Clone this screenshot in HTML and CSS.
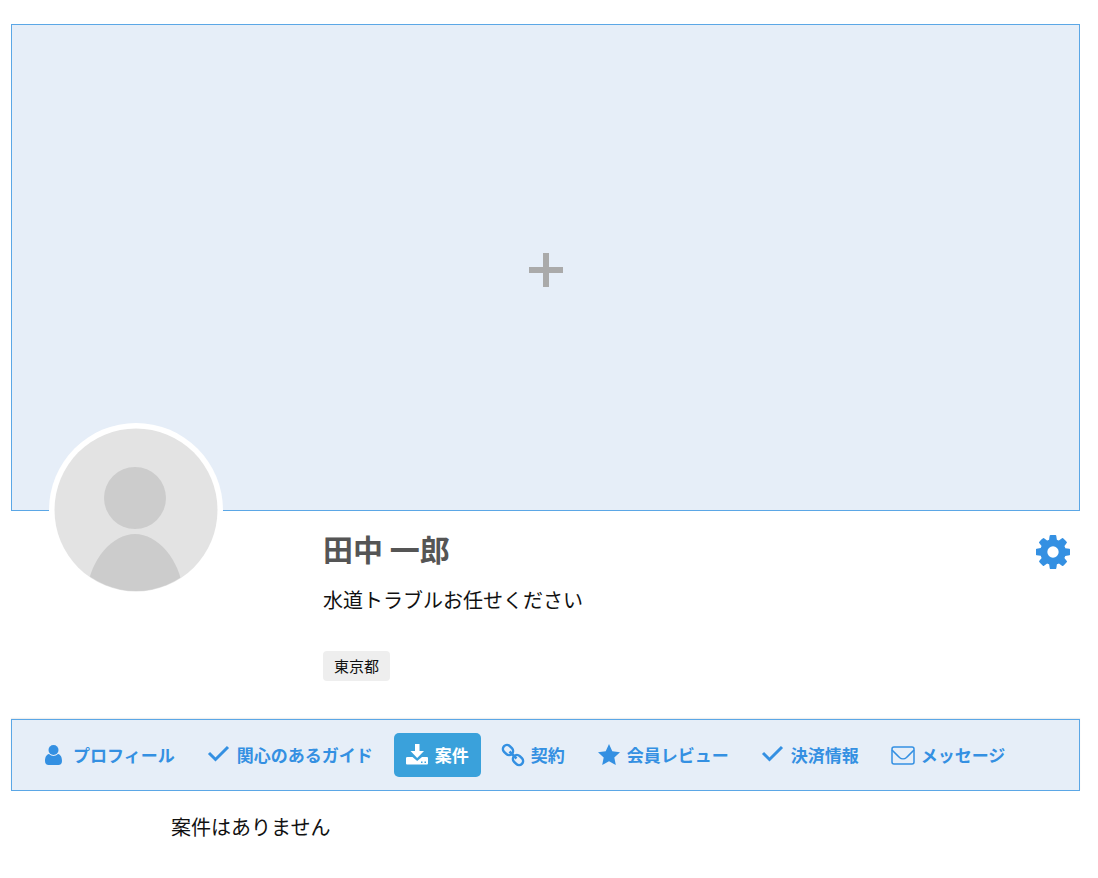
FILE: index.html
```
<!DOCTYPE html>
<html lang="ja">
<head>
  <meta charset="UTF-8" />
  <meta name="viewport" content="width=device-width, initial-scale=1" />
  <title>田中 一郎</title>
  <link rel="stylesheet" href="styles.css">
</head>
<body>

<main class="page">
  <button type="button" class="cover" aria-label="カバー写真を追加">
    <svg class="plus" viewBox="0 0 36 36"><path d="M15 1h6v14h14v6H21v14h-6V21H1v-6h14z"/></svg>
  </button>

  <section class="profile">
    <svg class="avatar" viewBox="0 0 174 174">
      <defs>
        <clipPath id="face"><circle cx="87" cy="87" r="81"/></clipPath>
      </defs>
      <circle cx="87" cy="87" r="87" fill="#fff"/>
      <circle cx="87" cy="87" r="81.5" fill="#e3e3e3"/>
      <g clip-path="url(#face)" fill="#ccc">
        <circle cx="86" cy="75" r="31"/>
        <path d="M38 174C38 140 62 111 86 111S134 140 134 174z"/>
      </g>
    </svg>
    <div class="info">
      <h1>田中 一郎</h1>
      <p class="intro">水道トラブルお任せください</p>
      <span class="tag">東京都</span>
    </div>
    <button type="button" class="settings" aria-label="設定">
      <svg viewBox="0 0 1536 1536"><path d="M1024 768q0-106-75-181t-181-75-181 75-75 181 75 181 181 75 181-75 75-181zm512-109v222q0 12-8 23t-20 13l-185 28q-19 54-39 91 35 50 107 138 10 12 10 25t-9 23q-27 37-99 108t-94 71q-12 0-26-9l-138-108q-44 23-91 38-16 136-29 186-7 28-36 28H657q-14 0-24.500-8.500T621 1506l-28-184q-49-16-90-37l-141 107q-10 9-25 9-14 0-25-11-126-114-165-168-7-10-7-23 0-12 8-23 15-21 51-66.500t54-70.500q-27-50-41-99L29 913q-13-2-21-12.500T0 877V655q0-12 8-23t19-13l186-28q14-46 39-92-40-57-107-138-10-12-10-24 0-10 9-23 26-36 98.500-107.500T337 135q13 0 26 10l138 107q44-23 91-38 16-136 29-186 7-28 36-28h222q14 0 24.500 8.500T915 30l28 184q49 16 90 37l142-107q9-9 24-9 13 0 25 10 129 119 165 170 7 8 7 22 0 12-8 23-15 21-51 66.500t-54 70.500q26 50 41 98l183 28q13 2 21 12.500t8 23.500z"/></svg>
    </button>
  </section>

  <nav class="tabs">
    <a href="#profile">
      <svg viewBox="0 0 22 22"><circle cx="9.500" cy="6" r="5"/><path d="M5 10c2.800 2.600 6.200 2.600 9 0 3 .6 4 3.800 4 7 0 2.600-1.400 4-3.500 4h-10C2.400 21 1 19.600 1 17c0-3.200 1-6.400 4-7z"/></svg>
      プロフィール
    </a>
    <a href="#guide">
      <svg viewBox="0 0 22 22"><path class="line" d="M1 9l6.500 6.500L20 3"/></svg>
      関心のあるガイド
    </a>
    <a href="#jobs" class="active">
      <svg viewBox="0 0 22 22"><path d="M9 0h4.500v7H18l-6.800 7L4.500 7H9zM1.500 13h5l4.700 4L16 13h5q1 0 1 1v5.500q0 1-1 1H1q-1 0-1-1V14q0-1 1.500-1zM15 17.500V19h1.500v-1.500zm3.500 0V19H20v-1.500z" fill-rule="evenodd"/></svg>
      案件
    </a>
    <a href="#contract">
      <svg viewBox="0 0 22 22"><g class="ring"><rect x="0.500" y="2" width="11" height="8" rx="4" transform="rotate(45 6 6)"/><rect x="10.500" y="12" width="11" height="8" rx="4" transform="rotate(45 16 16)"/><path d="M7.500 7.500l7 7"/></g></svg>
      契約
    </a>
    <a href="#review">
      <svg viewBox="0 0 22 22"><path d="M11 0l3.300 7.200 7.700 1-5.700 5.300L17.800 21 11 17.300 4.200 21l1.500-7.500L0 8.200l7.700-1z"/></svg>
      会員レビュー
    </a>
    <a href="#payment">
      <svg viewBox="0 0 22 22"><path class="line" d="M1 9l6.500 6.500L20 3"/></svg>
      決済情報
    </a>
    <a href="#message">
      <svg viewBox="0 0 22 22"><g class="thin"><rect x="0" y="3" width="22" height="17" rx="2"/><path d="M0 6c3 3 5 5 7.500 7.500 2 1.800 5 1.800 7 0C17 11 19 9 22 6"/></g></svg>
      メッセージ
    </a>
  </nav>

  <p class="empty">案件はありません</p>
</main>

</body>
</html>
```
FILE: styles.css
```
body {
  margin: 0;
  background-color: #fff;
  color: #111;
  font-family: "Noto Sans CJK JP", sans-serif;
  font-size: 20px;
  line-height: 30px;
}
button {
  padding: 0;
  border: none;
  background: none;
  cursor: pointer;
}
svg {
  display: block;
  fill: currentColor;
  overflow: visible;
}
.page {
  padding: 24px 18px 24px 11px;
}
.cover {
  display: flex;
  align-items: center;
  justify-content: center;
  box-sizing: border-box;
  width: 100%;
  height: 487px;
  padding-top: 4px;
  border: 1px solid #5ba7e6;
  background-color: #e6eef8;
  color: #aaa;
}
.plus {
  width: 36px;
  height: 36px;
}
.profile {
  display: flex;
  align-items: flex-start;
  padding: 0 10px 38px 38px;
}
.avatar {
  flex: none;
  width: 174px;
  height: 174px;
  margin-top: -88px;
}
.info {
  flex: 1;
  margin-left: 100px;
  padding-top: 17px;
}
h1 {
  margin: 0;
  color: #555;
  font-size: 30px;
  line-height: 40px;
}
.intro {
  margin: 17px 0 36px;
}
.tag {
  display: block;
  width: max-content;
  padding: 0 11px;
  border-radius: 4px;
  background-color: #eee;
  font-size: 15px;
}
.settings {
  margin-top: 24px;
  color: #3490e2;
}
.settings svg {
  width: 34px;
  height: 34px;
}
.tabs {
  display: flex;
  flex-wrap: wrap;
  gap: 9px;
  padding: 13px 20px;
  border: 1px solid #5ba7e6;
  background-color: #e6eef8;
  box-shadow: 0 -1px 1px #eee;
}
.tabs a {
  display: flex;
  align-items: center;
  gap: 7px;
  padding: 0 12px;
  border-radius: 5px;
  color: #3490e2;
  font-size: 17px;
  font-weight: bold;
  line-height: 44px;
  text-decoration: none;
}
.tabs .active {
  background-color: #3aa1db;
  color: #fff;
}
.tabs svg {
  width: 22px;
  height: 22px;
}
.line, .ring, .thin {
  fill: none;
  stroke: currentColor;
}
.line {
  stroke-width: 3;
}
.ring {
  stroke-width: 2.5;
}
.thin {
  stroke-width: 1.5;
}
.empty {
  margin: 21px 0 0 160px;
}
```
